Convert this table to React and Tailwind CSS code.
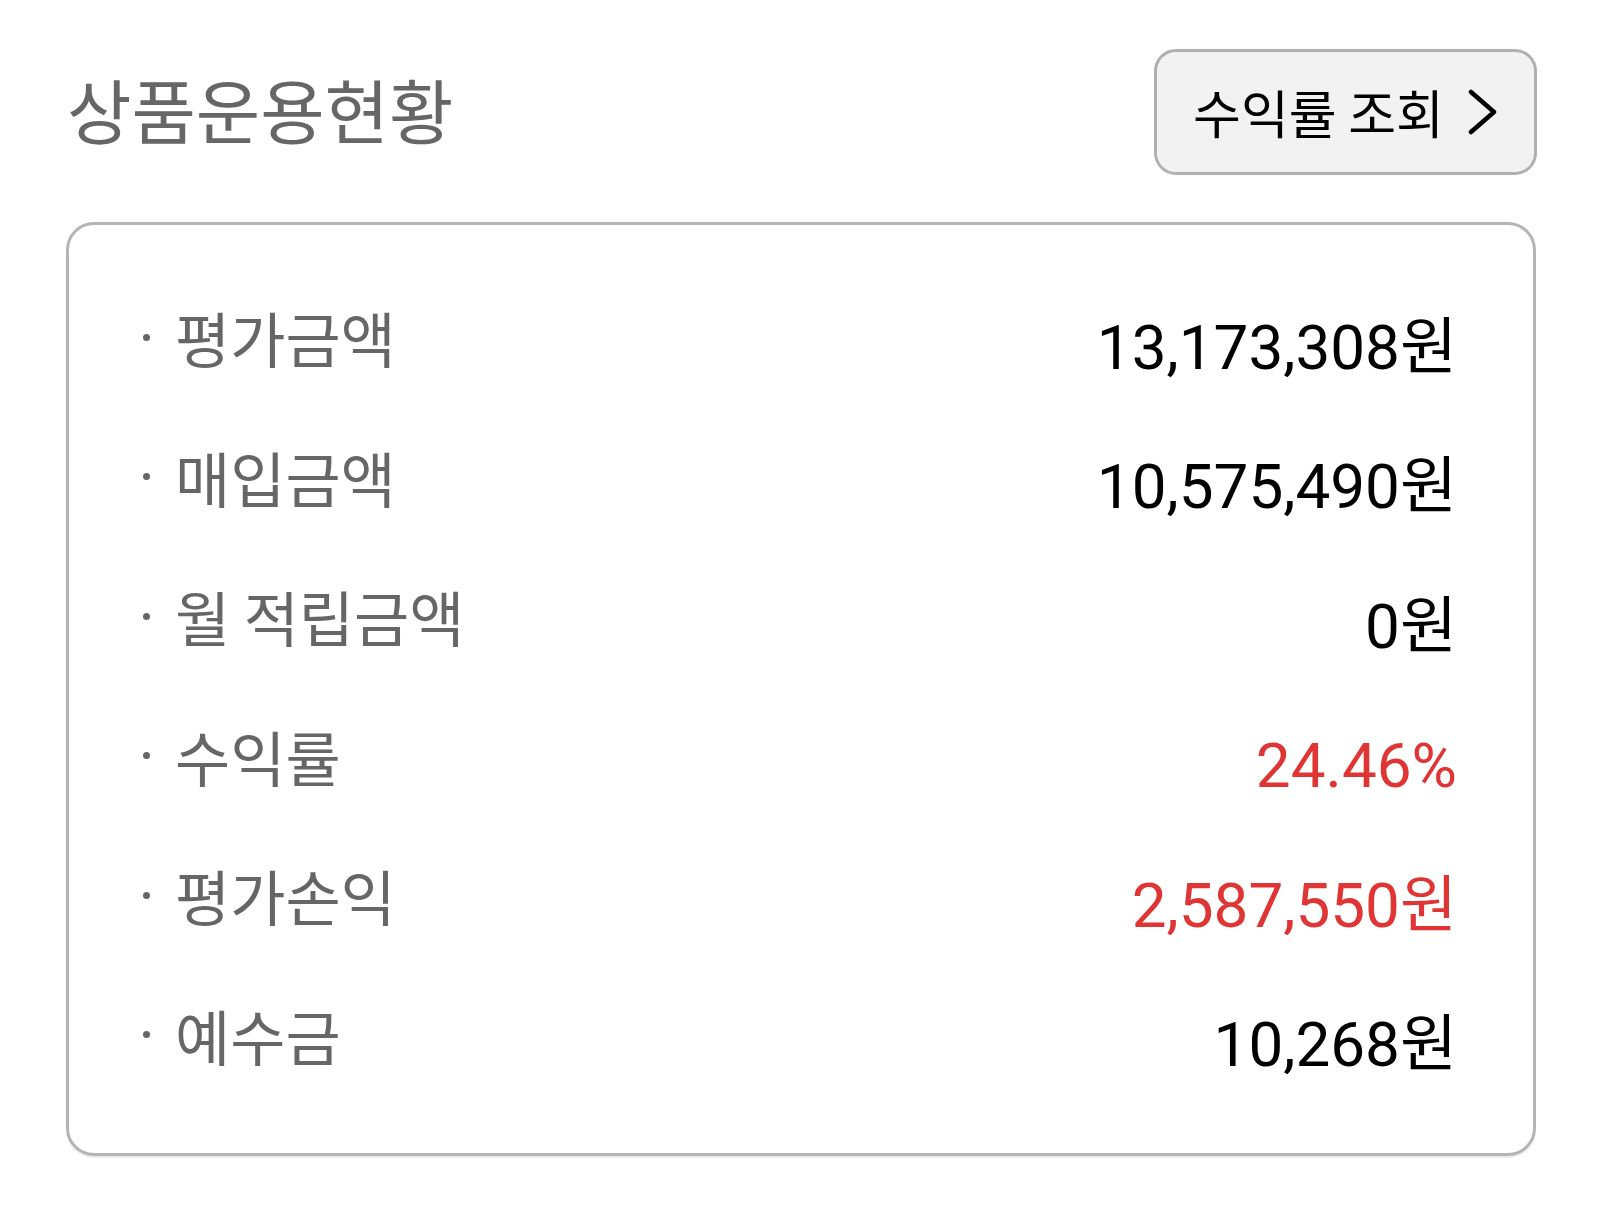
import React from "react";

const rows = [
  { label: "평가금액", value: "13,173,308원", red: false },
  { label: "매입금액", value: "10,575,490원", red: false },
  { label: "월 적립금액", value: "0원", red: false },
  { label: "수익률", value: "24.46%", red: true },
  { label: "평가손익", value: "2,587,550원", red: true },
  { label: "예수금", value: "10,268원", red: false },
];

export default function App() {
  return (
    <div
      className="w-[1604px] h-[1213px] bg-white px-[66px] pt-[49px]"
      style={{ fontFamily: '"Noto Sans CJK KR", "Noto Sans", sans-serif' }}
    >
      <div className="flex items-center justify-between">
        <h1 className="pl-[1px] pb-[6px] text-[70px] leading-none text-[#666666] font-normal">
          상품운용현황
        </h1>
        <button className="mr-[1px] flex h-[126px] w-[383px] items-center justify-center gap-[24px] rounded-[22px] border-[3px] border-[#b0b0b0] bg-[#f2f2f2] text-[52px] leading-none text-black">
          <span>수익률 조회</span>
          <svg width="30" height="46" viewBox="0 0 30 46" fill="none">
            <path d="M3 3 L26 23 L3 43" stroke="#000" strokeWidth="4.5" strokeLinecap="round" strokeLinejoin="round" />
          </svg>
        </button>
      </div>
      <div className="mt-[47px] flex h-[934px] w-[1470px] flex-col rounded-[28px] border-[3px] border-[#b4b4b4] pt-[46px] pb-[45px] pl-[74px] pr-[76px] shadow-[0_2px_1px_rgba(0,0,0,0.08)]">
        {rows.map((r) => (
          <div key={r.label} className="flex h-[139.5px] shrink-0 items-center justify-between">
            <div className="flex items-center pb-[7px]">
              <span className="mr-[25px] h-[7px] w-[7px] rounded-full bg-[#666666]" />
              <span className="text-[60px] leading-none text-[#666666]">{r.label}</span>
            </div>
            <span
              className={`pt-[14px] text-[62px] leading-none ${r.red ? "text-[#e03535]" : "text-black"}`}
              style={{ fontFamily: 'Roboto, "Noto Sans CJK KR", sans-serif' }}
            >
              {r.value}
            </span>
          </div>
        ))}
      </div>
    </div>
  );
}
